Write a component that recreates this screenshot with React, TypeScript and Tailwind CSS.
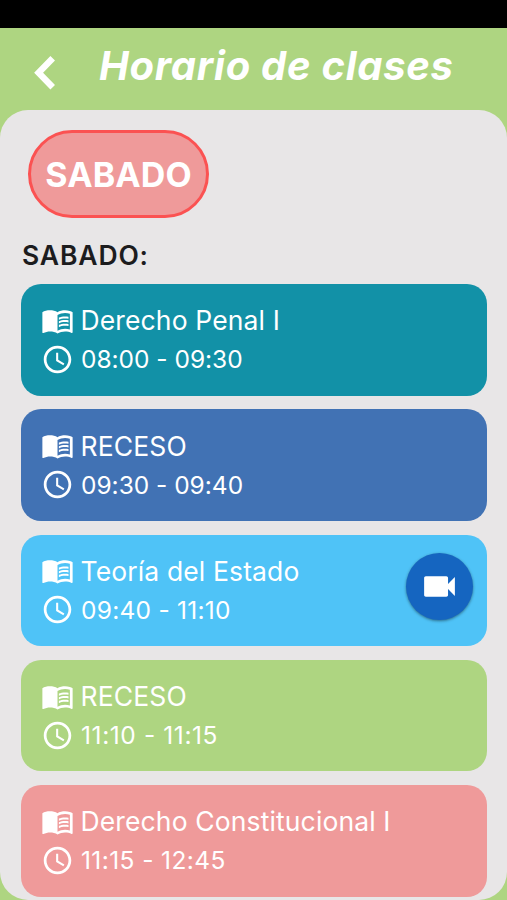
import { MdAccessTime, MdVideocam } from 'react-icons/md';
import clsx from 'clsx';

interface ClassItem {
  id: number;
  name: string;
  time: string;
  color: string;
  timeTracking: string;
  hasCall?: boolean;
}

// timeTracking evens out the narrow "1" digits
const classes: ClassItem[] = [
  { id: 1, name: 'Derecho Penal I', time: '08:00 - 09:30', color: 'bg-[#1291a7]', timeTracking: 'tracking-[-0.02px]' },
  { id: 2, name: 'RECESO', time: '09:30 - 09:40', color: 'bg-[#4172b4]', timeTracking: 'tracking-[-0.02px]' },
  { id: 3, name: 'Teoría del Estado', time: '09:40 - 11:10', color: 'bg-[#4fc3f7]', timeTracking: 'tracking-[0.25px]', hasCall: true },
  { id: 4, name: 'RECESO', time: '11:10 - 11:15', color: 'bg-[#aed581]', timeTracking: 'tracking-[0.6px]' },
  { id: 5, name: 'Derecho Constitucional I', time: '11:15 - 12:45', color: 'bg-[#ef9a9a]', timeTracking: 'tracking-[0.4px]' },
];

// Open book with a solid left page
function BookIcon({ className }: { className?: string }) {
  return (
    <svg viewBox="0 0 24 24" fill="currentColor" className={className}>
      <path d="M21 5c-1.11-.35-2.33-.5-3.5-.5-1.95 0-4.05.4-5.5 1.5-1.45-1.1-3.55-1.5-5.5-1.5S2.45 4.9 1 6v14.65c0 .25.25.5.5.5.1 0 .15-.05.25-.05C3.1 20.45 5.05 20 6.5 20c1.95 0 4.05.4 5.5 1.5 1.35-.85 3.8-1.5 5.5-1.5 1.65 0 3.35.3 4.75 1.05.1.05.15.05.25.05.25 0 .5-.25.5-.5V6c-.6-.45-1.25-.75-2-1zm0 13.5c-1.1-.35-2.3-.5-3.5-.5-1.7 0-4.15.65-5.5 1.5V8c1.35-.85 3.8-1.5 5.5-1.5 1.2 0 2.4.15 3.5.5v11.5z" />
      <path d="M17.5 10.5c.88 0 1.73.09 2.5.26V9.24c-.79-.15-1.64-.24-2.5-.24-1.7 0-3.24.29-4.5.83v1.66c1.13-.64 2.7-.99 4.5-.99zM13 12.49v1.66c1.13-.64 2.7-.99 4.5-.99.88 0 1.73.09 2.5.26V11.9c-.79-.15-1.64-.24-2.5-.24-1.7 0-3.24.3-4.5.83zM17.5 14.33c-1.7 0-3.24.29-4.5.83v1.66c1.13-.64 2.7-.99 4.5-.99.88 0 1.73.09 2.5.26v-1.52c-.79-.16-1.64-.24-2.5-.24z" />
    </svg>
  );
}

function Header() {
  return (
    <header className="flex h-[82px] shrink-0 items-start">
      <button type="button" aria-label="Volver" className="mt-[27px] ml-[33px]">
        <svg viewBox="0 0 24 36" className="h-9 w-6" fill="none" stroke="white" strokeWidth="6.4">
          <path d="M19.7 3.2 L5.6 17.7 L19.7 32.2" />
        </svg>
      </button>
      <h1 className="mt-[14px] ml-[42px] text-[40px] leading-[48px] font-bold tracking-[0.7px] whitespace-nowrap text-white italic">
        Horario de clases
      </h1>
    </header>
  );
}

function ClassCard({ item }: { item: ClassItem }) {
  return (
    <li className={clsx('flex h-[111.5px] shrink-0 items-center justify-between rounded-[20px] pr-[14px] pl-5', item.color)}>
      <div className="text-white">
        <div className="flex h-[39px] items-center">
          <BookIcon className="size-[33px] shrink-0" />
          <span className="ml-[6.5px] pt-px text-[26.5px] leading-[39px] tracking-[0.13px] whitespace-nowrap">{item.name}</span>
        </div>
        <div className="flex h-[39px] items-center">
          <MdAccessTime className="size-[33px] shrink-0" />
          <span className={clsx('ml-[7px] pt-px text-[24.5px] leading-[39px] whitespace-nowrap', item.timeTracking)}>{item.time}</span>
        </div>
      </div>
      {item.hasCall && (
        <button
          type="button"
          aria-label="Videollamada"
          className="mb-2 flex size-[67px] items-center justify-center rounded-full bg-[#1565c0] text-white shadow-[0_1px_3px_rgba(0,0,0,0.45)]"
        >
          <MdVideocam className="size-[41px]" />
        </button>
      )}
    </li>
  );
}

export default function App() {
  return (
    <div className="flex h-[900px] w-full flex-col overflow-hidden bg-[#aed581] font-['Inter',sans-serif]">
      <div className="h-7 shrink-0 bg-black" />
      <Header />
      <main className="flex h-[790px] flex-col rounded-[28px] bg-[#e8e6e7] pt-5 pr-5 pl-[21px]">
        <div className="ml-[7px] flex h-[88px] w-[181px] shrink-0 items-center justify-center rounded-full border-[3px] border-[#fb5252] bg-[#ef9a9a] text-[34px] font-bold tracking-[0.1px] text-white">
          SABADO
        </div>
        <h2 className="mt-[19px] ml-px h-9 text-[26.5px] leading-9 font-semibold tracking-[0.85px] text-[#1c1c1e]">SABADO:</h2>
        <ul className="mt-[11px] flex flex-col gap-[13.8px]">
          {classes.map((item) => (
            <ClassCard key={item.id} item={item} />
          ))}
        </ul>
      </main>
    </div>
  );
}
